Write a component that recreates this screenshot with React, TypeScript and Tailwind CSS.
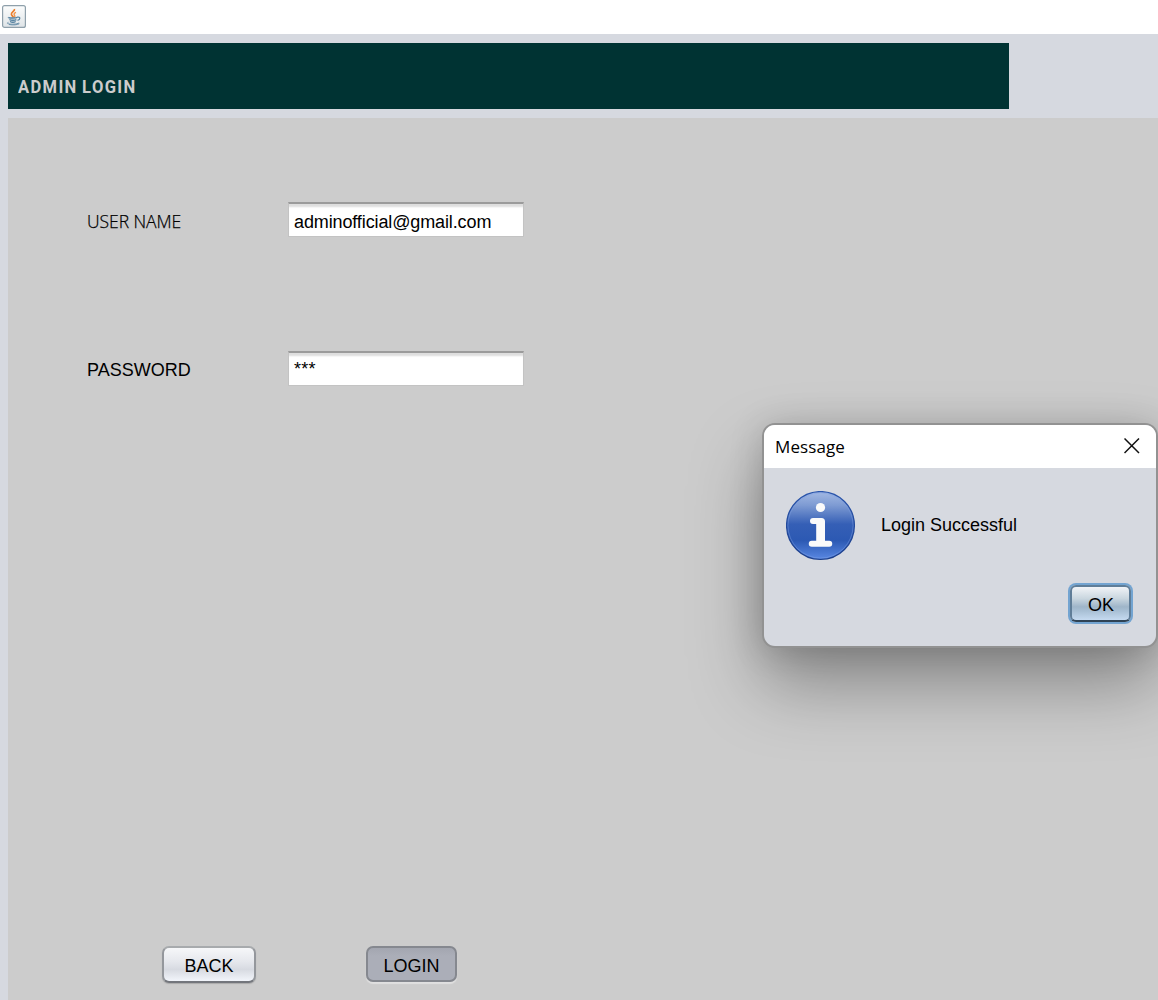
import React from "react";

function JavaIcon() {
  return (
    <svg width="26" height="26" viewBox="0 0 26 26" fill="none">
      <defs>
        <linearGradient id="tile" x1="0" y1="0" x2="0" y2="1">
          <stop offset="0" stopColor="#fcfdfd" />
          <stop offset="1" stopColor="#dfe4e7" />
        </linearGradient>
      </defs>
      <rect x="0.600" y="0.600" width="22.800" height="21.800" rx="2" fill="url(#tile)" stroke="#8fa0ab" strokeWidth="1.200" />
      <path d="M12.400 4c.8 2-3.2 3.200-3 5.200.1 1.300 1.600 1.900 1.900 3.200" stroke="#ea7d2b" strokeWidth="1.700" />
      <path d="M14 7.400c-2 .9-2.400 1.700-1.400 3 .5.7.300 1.400-.3 2" stroke="#f0944c" strokeWidth="1.400" />
      <path d="M6.600 12.200c-1.600.9 7.500 1.200 8.800.1M7.400 14.500c1.500 1 5.400 1 7 .1M8 16.500c1.500.8 4.200.8 5.700 0" stroke="#54809f" strokeWidth="1.300" />
      <path d="M15.200 12.200c3.500-.7 3.400 2.500.3 3.200" stroke="#54809f" strokeWidth="1.200" />
      <path d="M6.400 17.300c-4.500 1.900 7.500 2.800 10.700.6M7 19.500c4 .8 8.500.4 10.400-.8" stroke="#6a90aa" strokeWidth="1" />
    </svg>
  );
}

function InfoIcon() {
  return (
    <svg width="70" height="70" viewBox="0 0 70 70">
      <defs>
        <linearGradient id="info" x1="0" y1="0" x2="0" y2="1">
          <stop offset="0" stopColor="#a3b9e3" />
          <stop offset="0.2" stopColor="#7e9bd3" />
          <stop offset="0.48" stopColor="#355fb6" />
          <stop offset="0.72" stopColor="#2c59b3" />
          <stop offset="1" stopColor="#5988e3" />
        </linearGradient>
        <linearGradient id="rim" x1="0" y1="0" x2="0" y2="1">
          <stop offset="0" stopColor="#2a55ac" />
          <stop offset="1" stopColor="#1c3f8c" />
        </linearGradient>
      </defs>
      <circle cx="34.500" cy="34.500" r="33.900" fill="url(#info)" stroke="url(#rim)" strokeWidth="1.300" />
      <circle cx="34.500" cy="34.500" r="32.600" fill="none" stroke="#7fa0e2" strokeOpacity="0.450" strokeWidth="1" />
      <circle cx="34.500" cy="16.500" r="4.600" fill="#fafafa" />
      <path d="M27 27h8.500a3.500 3.500 0 0 1 3.500 3.500V49.700h4.200a3.050 3.050 0 0 1 0 6.100H25.800a3.050 3.050 0 0 1 0-6.100H30.200V33H27a3 3 0 0 1 0-6z" fill="#fafafa" />
    </svg>
  );
}

function Field({ label, value, labelClass, valueClass }: { label: string; value: string; labelClass: string; valueClass: string }) {
  return (
    <div className="flex h-[35px] items-center">
      <div className={`w-[201px] whitespace-nowrap text-black ${labelClass}`}>{label}</div>
      <div className="h-[35px] w-[236px] border border-t-2 border-[#c3c3c3] border-t-[#9b9b9b] bg-white pl-[5px] shadow-[inset_0_4px_2px_-1px_#dedede]">
        <div className={`whitespace-nowrap text-[18px] text-black ${valueClass}`}>{value}</div>
      </div>
    </div>
  );
}

function MessageDialog() {
  return (
    <div className="absolute left-[762px] top-[423px] h-[225px] w-[396px] rounded-[13px] bg-[#929292] p-[2px] shadow-[0_36px_70px_rgba(0,0,0,0.34),0_2px_34px_rgba(0,0,0,0.16)]">
      <div className="flex h-full flex-col overflow-hidden rounded-[11px] bg-[#d6d9e0]">
        <div className="flex h-[43px] shrink-0 items-center justify-between bg-white pl-[11px] pr-[16px]">
          <span className="font-['Open_Sans',sans-serif] text-[17px] tracking-[0.1px] text-black">Message</span>
          <svg width="16" height="16" viewBox="0 0 16 16" className="-mt-[2px]" stroke="#111" strokeWidth="1.500">
            <path d="M0.500 0.500L15 15M15 0.500L0.500 15" />
          </svg>
        </div>
        <div className="flex items-start pl-[22px] pt-[23px]">
          <InfoIcon />
          <span className="ml-[25px] mt-[23px] whitespace-nowrap text-[18px] leading-[22px] text-black">Login Successful</span>
        </div>
        <div className="mr-[25px] mt-[24px] flex justify-end">
          <button className="h-[37px] w-[61px] rounded-[6px] border-2 border-[#5f7d98] border-b-[#2e4254] bg-[linear-gradient(#f1f3f7,#c9d6df_35%,#9fb5c9_60%,#a8bfd4_72%,#c5daf0)] pl-px pt-[2px] text-[18px] leading-[22px] text-black shadow-[0_0_0_2px_#73a4d1]">
            OK
          </button>
        </div>
      </div>
    </div>
  );
}

export default function App() {
  return (
    <div className="relative flex h-[1000px] w-[1158px] flex-col overflow-hidden bg-[#d6d9e0] font-['Liberation_Sans',Arial,sans-serif]">
      <div className="h-[34px] shrink-0 bg-white pl-[2px] pt-[5px]">
        <JavaIcon />
      </div>
      <header className="ml-2 mt-[9px] h-[66px] w-[1001px] shrink-0 bg-[#003333] pl-[10px] pt-[32px]">
        <h1 className="w-max origin-left scale-x-[0.92] whitespace-nowrap font-['Roboto',sans-serif] text-[18px] font-bold leading-[24px] tracking-[1.450px] [word-spacing:-1px] text-[#cccccc]">ADMIN LOGIN</h1>
      </header>
      <main className="ml-2 mt-[9px] flex min-h-0 flex-1 flex-col bg-[#cccccc]">
        <div className="ml-[79px] mt-[84px] flex flex-col gap-[114px]">
          <Field label="USER NAME" value="adminofficial@gmail.com" labelClass="font-['Open_Sans',sans-serif] font-light text-[17.5px] tracking-[-0.05px] pt-[3px] [-webkit-text-stroke:0.25px_black]" valueClass="leading-[36px] tracking-[-0.12px]" />
          <Field label="PASSWORD" value="***" labelClass="text-[18px] pt-[3px]" valueClass="leading-[33px] tracking-[0.3px]" />
        </div>
        <div className="ml-[154px] mt-[560px] flex gap-[110px]">
          <button className="h-[37px] w-[94px] rounded-[7px] border-2 border-[#94979c] border-t-[#a7aaad] border-b-[#73767c] bg-[linear-gradient(#f6f7f9,#e6e8ed_40%,#d7dae1_65%,#f2f5fb)] pt-[2px] text-[18px] leading-[22px] text-black shadow-[0_1px_1px_#aaaaaa]">BACK</button>
          <button className="h-[36px] w-[91px] rounded-[7px] border-2 border-[#85888f] bg-[linear-gradient(#a3a6b0,#abaeb8_25%,#abaeb8)] pt-[3px] text-[18px] leading-[22px] text-black shadow-[0_2px_1px_#e0e0e0]">LOGIN</button>
        </div>
      </main>
      <MessageDialog />
    </div>
  );
}
